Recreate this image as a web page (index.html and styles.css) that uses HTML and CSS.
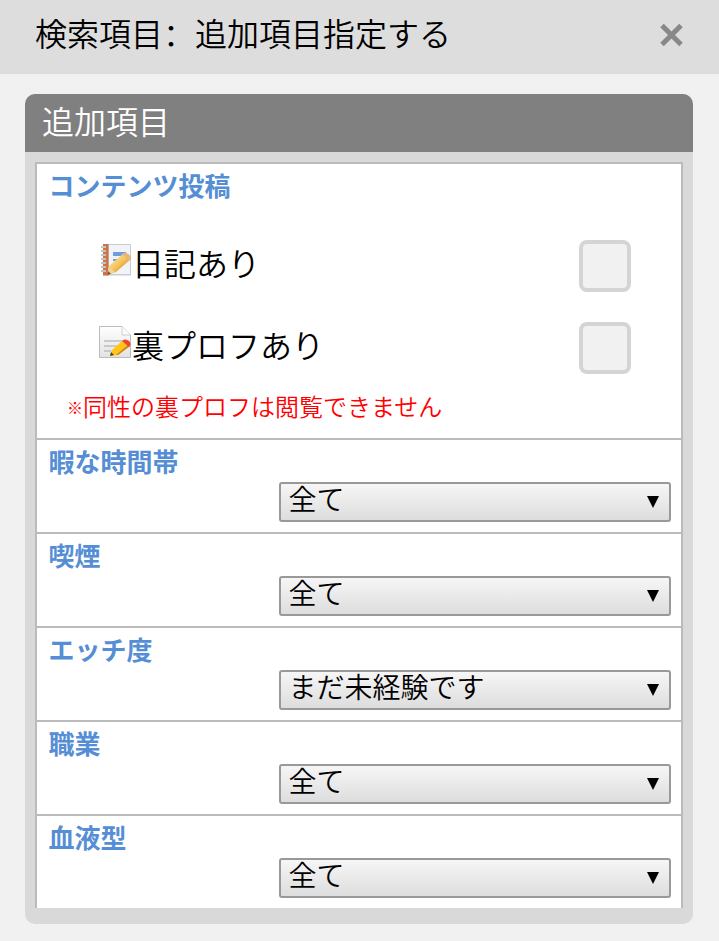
FILE: index.html
```html
<!DOCTYPE html>
<html lang="ja">
<head>
<meta charset="utf-8">
<title>検索項目</title>
<link rel="stylesheet" href="styles.css">
</head>
<body>
<header class="topbar">
  <h1>検索項目<span class="colon" lang="zh-CN">：</span>追加項目指定する</h1>
  <svg class="close" viewBox="0 0 28 28"><path d="M5 4.500L24 23.500M24 4.500L5 23.500"/></svg>
</header>
<main class="panel">
  <h2 class="panel-title">追加項目</h2>
  <div class="list">
    <section class="content">
      <h3>コンテンツ投稿</h3>
      <div class="options">
      <label class="option">
        <svg class="icon" viewBox="0 0 32 32">
          <defs>
            <linearGradient id="pencil" x1="0" y1="0" x2="1" y2="1"><stop offset=".2" stop-color="#ffe39a"/><stop offset=".5" stop-color="#f5c45b"/><stop offset=".8" stop-color="#cf8b2e"/></linearGradient>
            <linearGradient id="paper" x1="0" y1="0" x2="0" y2="1"><stop offset="0" stop-color="#fff"/><stop offset="1" stop-color="#e2e2e2"/></linearGradient>
          </defs>
          <rect x="4" y="0" width="28" height="31.500" rx="1" fill="#c9ccd0"/>
          <rect x="10" y="1" width="21" height="29" fill="#f1f3f6"/>
          <rect x="4" y="0" width="5.500" height="31.500" fill="#c97547"/>
          <path d="M2 3H7M2 7H7M2 11H7M2 15H7M2 19H7M2 23H7M2 27H7" stroke="#c9c3c0" stroke-width="2"/>
          <path d="M14 8H27V12H14ZM14 15H22V17H14Z" fill="#6d9fe0"/>
          <path d="M8 31L10 22L25 9Q31 9 32 15L17 28Z" fill="url(#pencil)"/>
          <path d="M10 23L16 28L8 31Z" fill="#efd2a5"/><path d="M8 31L9 27L12 30Z" fill="#8c4a2c"/>
          <path d="M25 9Q31 9 32 15L29 17Q28 12 23 11Z" fill="#eab27c"/>
        </svg><span>日記あり</span><i class="check"></i>
      </label>
      <label class="option">
        <svg class="icon" viewBox="0 0 32 32">
          <path d="M.5 .5H23L31.500 9V31.500H.5Z" fill="url(#paper)" stroke="#bcbcbc"/>
          <path d="M23 .5V9H31.500" fill="#fafafa" stroke="#cecece"/>
          <path d="M5 15H23M5 20H18M5 25H12" stroke="#bdbdbd" stroke-width="1.5"/>
          <path d="M11 30L13 24L24 14L31 20L19 29Z" fill="#ffc51a"/>
          <path d="M17 29L29 19L31 20L19 29Z" fill="#c98617"/>
          <path d="M23 15Q26 12 30 15Q33 18 30 21Z" fill="#ed4430"/>
          <path d="M11 30L12 26L15 29Z" fill="#4d4328"/>
        </svg><span>裏プロフあり</span><i class="check"></i>
      </label>
      </div>
      <p class="note"><span class="mark">※</span>同性の裏プロフは閲覧できません</p>
    </section>
    <section class="field"><h3>暇な時間帯</h3><div class="select"><span>全て</span><i class="arrow"></i></div></section>
    <section class="field"><h3>喫煙</h3><div class="select"><span>全て</span><i class="arrow"></i></div></section>
    <section class="field"><h3>エッチ度</h3><div class="select"><span>まだ未経験です</span><i class="arrow"></i></div></section>
    <section class="field"><h3>職業</h3><div class="select"><span>全て</span><i class="arrow"></i></div></section>
    <section class="field"><h3>血液型</h3><div class="select"><span>全て</span><i class="arrow"></i></div></section>
  </div>
</main>
</body>
</html>
```
FILE: styles.css
```css
* { box-sizing: border-box; }
body { margin: 0; height: 941px; overflow: hidden; background: #f1f1f1; color: #000; font-family: "Noto Sans CJK JP", sans-serif; font-weight: 350; }
h1, h2, h3, p { margin: 0; font-weight: inherit; }
.topbar { height: 74px; padding: 0 34px 4px 35px; display: flex; align-items: center; justify-content: space-between; background: #ddd; }
h1 { font-size: 32px; line-height: 48px; padding-bottom: 6px; }
.colon { font-family: "Noto Sans CJK SC", sans-serif; }
.close { width: 28px; height: 28px; stroke: #888; stroke-width: 5; fill: none; }
.panel { width: 668px; height: 830px; margin: 20px 0 0 25px; background: #d9d9d9; border-radius: 10px; overflow: hidden; }
.panel-title { height: 58px; padding-left: 17px; background: #808080; color: #fff; font-size: 32px; line-height: 52px; }
.list { height: 746px; margin: 10px 10px 0; border: 2px solid #bbb; border-bottom: 0; background: #fff; }
h3 { height: 42px; color: #558ed5; font-size: 26px; font-weight: 700; line-height: 42px; }
.content { height: 274px; padding-left: 11.5px; }
.field h3 { margin-left: -0.5px; }
.options { padding-top: 19px; }
.option { height: 82px; padding: 0 50px 0 50.5px; display: flex; align-items: center; font-size: 32px; }
.icon { width: 32px; height: 32px; margin: -12px 1px 0 0; }
.option span { margin-top: -8px; }
.check { width: 52px; height: 52px; margin-left: auto; background: #f1f1f1; border: 4px solid #d4d4d4; border-radius: 8px; }
.note { padding-left: 18.5px; color: #f00; font-size: 24px; line-height: 34px; }
.mark { display: inline-block; width: 16px; font-size: 16px; font-weight: 700; line-height: 24px; vertical-align: 2px; }
.field { height: 94px; padding-left: 12px; border-top: 2px solid #bbb; }
.select { width: 392px; height: 40px; margin-left: 230px; padding: 0 10px 0 7.5px; display: flex; align-items: center; justify-content: space-between; border: 2px solid #999; border-radius: 3px; background: linear-gradient(#f6f6f6, #ddd); font-size: 28px; line-height: 34px; }
.select span { margin-top: -8px; }
.arrow { border: 6px solid transparent; border-top: 12px solid #000; border-bottom: 0; }
```
